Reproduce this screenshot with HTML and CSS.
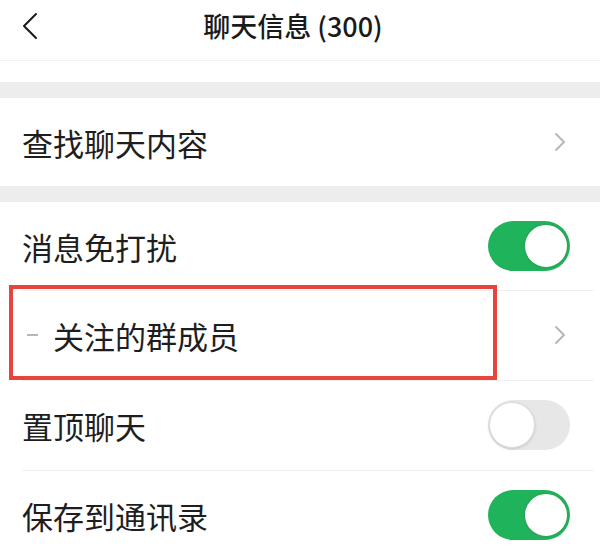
FILE: index.html
```html
<!DOCTYPE html>
<html lang="zh-CN">
<head>
<meta charset="utf-8">
<link rel="stylesheet" href="styles.css">
</head>
<body>
<div class="page">
  <header class="header">
    <div class="back">
      <svg width="16" height="28" viewBox="0 0 16 28"><path d="M14 2 L2 14 L14 26" fill="none" stroke="#1a1a1a" stroke-width="2" stroke-linecap="round" stroke-linejoin="round"/></svg>
    </div>
    <div class="title">聊天信息 (300)</div>
    <div class="header-side"></div>
  </header>
  <div class="spacer"></div>
  <div class="band"></div>
  <section class="group">
    <div class="row row-first">
      <span class="label">查找聊天内容</span>
      <svg class="chev" width="12" height="20" viewBox="0 0 12 20"><path d="M2 2 L10 10 L2 18" fill="none" stroke="#b5b5b5" stroke-width="1.8" stroke-linecap="round" stroke-linejoin="round"/></svg>
    </div>
  </section>
  <div class="band"></div>
  <section class="group">
    <div class="row row-first">
      <span class="label">消息免打扰</span>
      <span class="toggle on"><span class="knob"></span></span>
    </div>
    <div class="row highlighted">
      <span class="label"><span class="dash"></span>关注的群成员</span>
      <svg class="chev" width="12" height="20" viewBox="0 0 12 20"><path d="M2 2 L10 10 L2 18" fill="none" stroke="#b5b5b5" stroke-width="1.8" stroke-linecap="round" stroke-linejoin="round"/></svg>
      <div class="mark"></div>
    </div>
    <div class="row">
      <span class="label">置顶聊天</span>
      <span class="toggle off"><span class="knob"></span></span>
    </div>
    <div class="row">
      <span class="label">保存到通讯录</span>
      <span class="toggle on"><span class="knob"></span></span>
    </div>
  </section>
</div>
</body>
</html>
```

FILE: styles.css
```css
html, body {
  margin: 0;
  padding: 0;
  background: #ffffff;
}
body {
  font-family: "Noto Sans CJK SC", "Noto Sans", "Liberation Sans", sans-serif;
  color: #1c1c1c;
  overflow: hidden;
}
.page {
  width: 600px;
  height: 555px;
  overflow: hidden;
}
.header {
  height: 61px;
  display: grid;
  grid-template-columns: 80px 1fr 80px;
  align-items: center;
  padding-right: 14px;
  box-sizing: border-box;
  border-bottom: 1px solid #f2f2f2;
}
.back {
  padding-left: 22px;
  display: flex;
  align-items: center;
  height: 100%;
}
.back svg {
  display: block;
  margin-top: -8px;
}
.title {
  text-align: center;
  font-size: 27px;
  font-weight: 500;
  line-height: 1;
  margin-top: -10px;
  color: #1a1a1a;
}
.spacer {
  height: 21px;
}
.band {
  height: 16px;
  background: #ededed;
}
.group {
  background: #ffffff;
}
.row {
  position: relative;
  height: 89px;
  display: flex;
  align-items: center;
  justify-content: space-between;
  padding: 0 30px 0 22px;
}
.row + .row {
  height: 90px;
}
.row + .row::before {
  content: "";
  position: absolute;
  top: 0;
  left: 22px;
  right: 6px;
  height: 1px;
  background: #efefef;
}
.row-first {
  height: 88px;
}
.label {
  font-size: 31px;
  line-height: 1;
  display: flex;
  align-items: center;
  color: #1e1e1e;
}
.dash {
  display: inline-block;
  width: 11px;
  height: 1.5px;
  background: #b8b8b8;
  margin: 0 15px 0 5px;
}
.chev {
  display: block;
  margin-right: 4px;
}
.toggle {
  position: relative;
  width: 82px;
  height: 50px;
  border-radius: 25px;
  box-sizing: border-box;
  display: block;
  flex: none;
}
.toggle.on {
  background: #1fb45c;
}
.toggle.off {
  background: #e7e7e7;
}
.knob {
  position: absolute;
  top: 2px;
  width: 46px;
  height: 46px;
  border-radius: 50%;
  background: #ffffff;
  box-sizing: border-box;
}
.toggle.on .knob {
  right: 1px;
  border: 2px solid #2aa85a;
}
.toggle.off .knob {
  left: 1px;
  border: 1px solid #dcdcdc;
  box-shadow: 0 1px 3px rgba(0, 0, 0, 0.15);
}
.mark {
  position: absolute;
  left: 9px;
  top: -5px;
  width: 488px;
  height: 95px;
  border: 4px solid #e6443c;
  box-sizing: border-box;
  pointer-events: none;
}
```
